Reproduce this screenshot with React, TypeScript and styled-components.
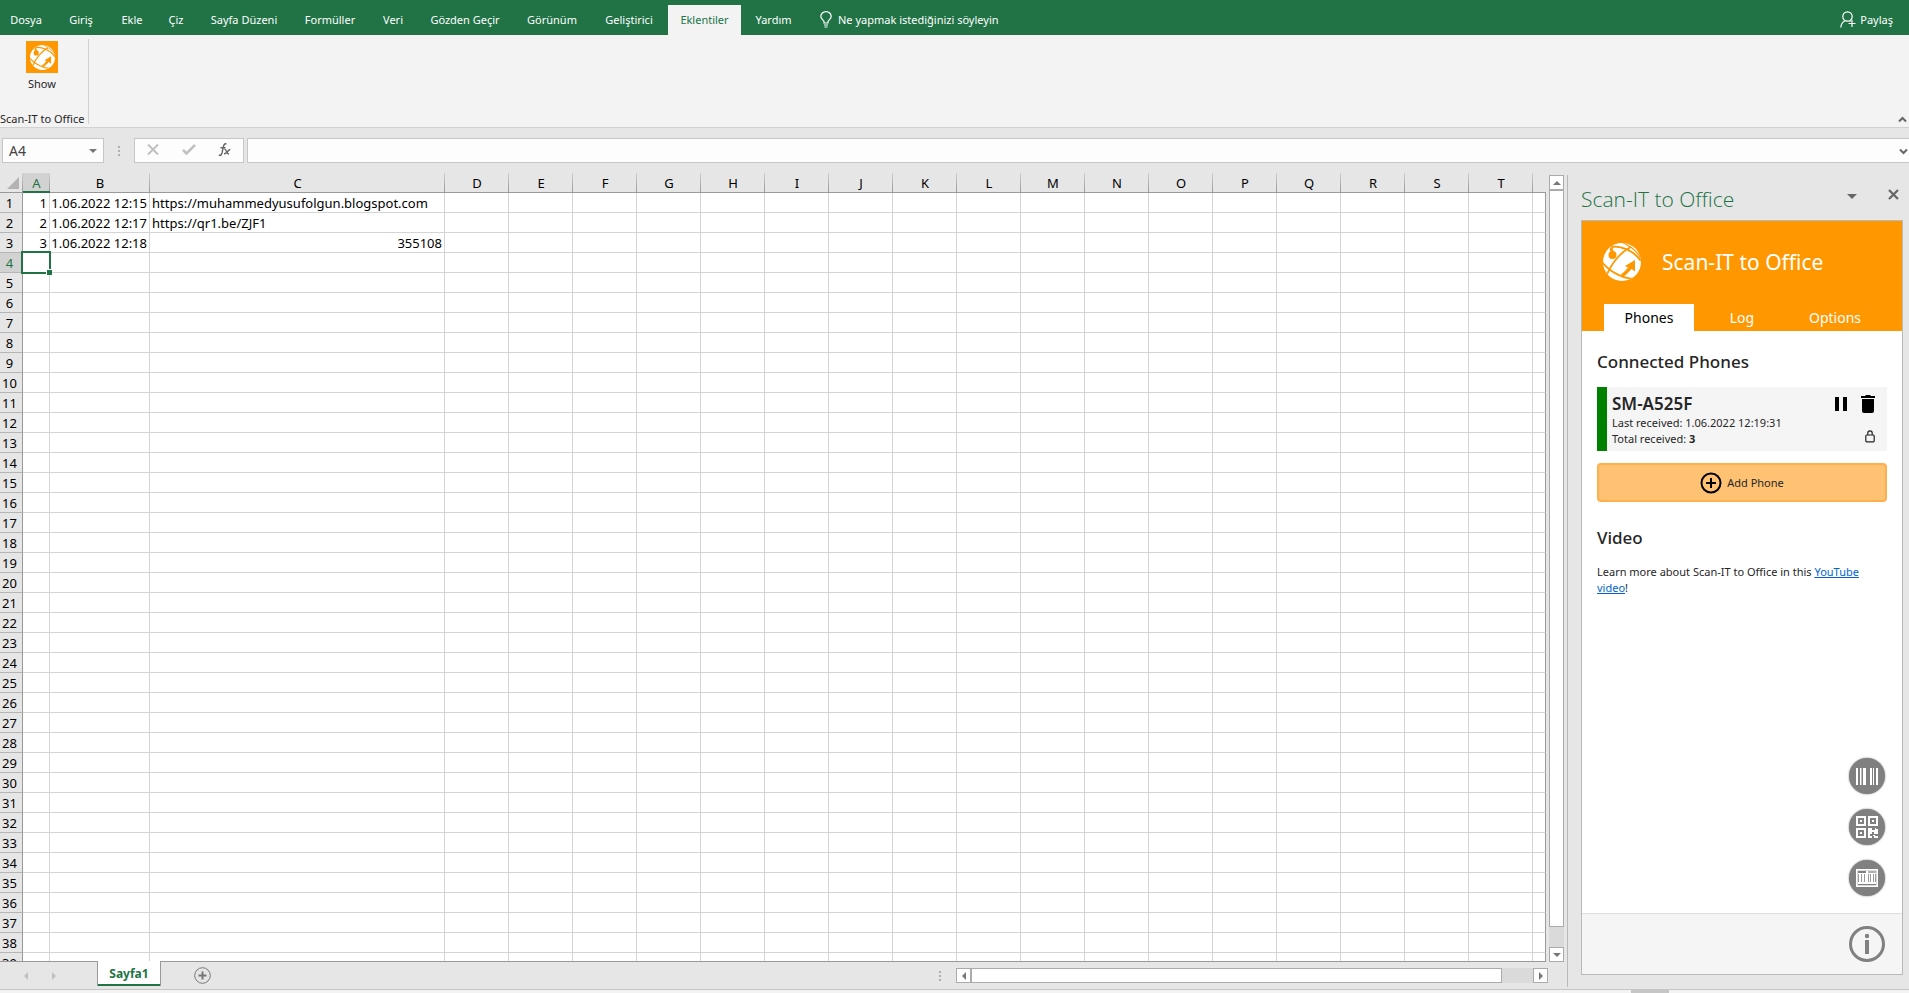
import React from "react";
import styled, { createGlobalStyle, css } from "styled-components";

const ui = `"Noto Sans", "Open Sans", sans-serif`;
const green = "#217346";
const orange = "#ff9800";
const chrome = "#e6e6e6";
const line = "#c6c6c6";

const GlobalStyle = createGlobalStyle`
  *, *::before, *::after { box-sizing: border-box; }
  body { margin: 0; font-family: ${ui}; font-size: 11px; color: #262626; background: ${chrome}; }
  button, input { font: inherit; color: inherit; }
  button { padding: 0; border: 0; background: none; cursor: pointer; }
  h1, h2, h3, p { margin: 0; }
`;

const Window = styled.div`
  display: flex;
  flex-direction: column;
  height: 100vh;
  overflow: hidden;
`;

/* ---------- ribbon ---------- */

const TabBar = styled.nav`
  display: flex;
  flex: none;
  height: 35px;
  padding-top: 5px;
  background: ${green};
  color: #fff;
`;

const RibbonTab = styled.button<{ $active?: boolean; $w: number }>`
  width: ${(p) => p.$w}px;
  height: 30px;
  padding-bottom: 1px;
  white-space: nowrap;
  ${(p) => p.$active && css`background: #f3f3f3; color: ${green};`}
`;

const TellMe = styled.button`
  display: flex;
  align-items: center;
  gap: 6px;
  height: 30px;
  margin-left: 14px;
  padding-bottom: 1px;
  white-space: nowrap;
`;

const Share = styled(TellMe)`
  margin-left: auto;
  margin-right: 16px;
  gap: 4px;
`;

const Ribbon = styled.section`
  display: flex;
  flex: none;
  justify-content: space-between;
  align-items: flex-end;
  height: 93px;
  background: #f3f3f3;
  border-bottom: 1px solid #d2d2d2;
`;

const RibbonGroup = styled.div`
  display: flex;
  flex-direction: column;
  justify-content: space-between;
  width: 89px;
  height: 85px;
  margin-bottom: 3px;
  border-right: 1px solid #d2d2d2;
  white-space: nowrap;
`;

const ShowButton = styled.button`
  display: flex;
  flex-direction: column;
  align-items: center;
  align-self: flex-start;
  gap: 3px;
  width: 84px;
  padding-top: 2px;
  line-height: 16px;
`;

const LogoTile = styled.span`
  display: flex;
  align-items: center;
  justify-content: center;
  width: 32px;
  height: 32px;
  background: ${orange};
`;

const GroupName = styled.span`
  line-height: 10px;
`;

const Collapse = styled.button`
  display: flex;
  padding: 0 2px 4px;
`;

/* ---------- formula bar ---------- */

const FormulaBar = styled.div`
  display: flex;
  flex: none;
  align-items: center;
  height: 35px;
  padding: 10px 0 0 2px;
  color: #444;
`;

const Field = styled.div`
  display: flex;
  align-items: center;
  height: 25px;
  background: #fdfdfd;
  border: 1px solid ${line};
`;

const NameField = styled(Field)`
  width: 102px;
  padding-right: 6px;
`;

const CellInput = styled.input`
  flex: 1;
  min-width: 0;
  height: 23px;
  padding: 0 6px;
  border: 0;
  outline: 0;
  background: none;
  font-size: 14px;
`;

const Grip = styled.span`
  display: flex;
  flex-direction: column;
  gap: 2px;
  &::before, &::after, i { content: ""; width: 2px; height: 2px; background: #b0b0b0; }
`;

const BarGrip = styled(Grip)`
  margin: 0 14px;
`;

const EntryField = styled(Field)`
  justify-content: space-between;
  width: 110px;
  padding: 0 12px;
`;

const FormulaField = styled(Field)`
  flex: 1;
  margin-left: 3px;
  padding-right: 1px;
  border-right: 0;
`;

/* ---------- sheet ---------- */

const Workspace = styled.div`
  display: flex;
  flex: 1;
  min-height: 0;
`;

const Book = styled.main`
  display: flex;
  flex: 1;
  flex-direction: column;
  min-width: 0;
`;

const SheetArea = styled.div`
  display: flex;
  flex: 1;
  min-height: 0;
  padding: 10px 3px 0 0;
`;

const SheetView = styled.div`
  flex: 1;
  min-width: 0;
  overflow: hidden;
  border-bottom: 1px solid #999;
`;

const Grid = styled.table`
  width: 100%;
  table-layout: fixed;
  border-collapse: separate;
  border-spacing: 0;
  font-size: 13px;
  line-height: 18px;
  color: #000;
`;

const Col = styled.col<{ $w?: number }>`
  ${(p) => p.$w && css`width: ${p.$w}px;`}
`;

const ColHead = styled.th<{ $active?: boolean }>`
  height: 20px;
  padding: 1px 0 0;
  font-weight: 400;
  border-bottom: 1px solid #999;
  background: linear-gradient(#cfcfcf, #999) right / 1px 100% no-repeat ${chrome};
  ${(p) =>
    p.$active &&
    css`
      color: ${green};
      background-color: #d2d2d2;
      box-shadow: inset 0 -1px ${green};
      border-bottom-color: ${green};
    `}
  &:last-child { background: ${chrome}; }
`;

const Corner = styled(ColHead)`
  svg { display: block; margin-left: 7px; }
`;

const RowHead = styled.th<{ $active?: boolean }>`
  height: 20px;
  padding: 1px 3px 0 0;
  font-weight: 400;
  text-align: center;
  background: ${(p) => (p.$active ? "#d2d2d2" : chrome)};
  color: ${(p) => (p.$active ? green : "#000")};
  border-right: 1px solid #999;
  border-bottom: 1px solid #b5b5b5;
`;

const Cell = styled.td<{ $right?: boolean }>`
  position: relative;
  height: 20px;
  padding: 1px 2px 0 ${(p) => (p.$right ? 1 : 2)}px;
  white-space: nowrap;
  text-align: ${(p) => (p.$right ? "right" : "left")};
  background: #fff;
  border-right: 1px solid #d4d4d4;
  border-bottom: 1px solid #d4d4d4;
  &:last-child { border-right-color: #999; }
`;

const Selection = styled.div`
  position: absolute;
  inset: -2px;
  z-index: 1;
  border: 2px solid ${green};
  &::after {
    content: "";
    position: absolute;
    right: -3px;
    bottom: -3px;
    width: 6px;
    height: 6px;
    background: ${green};
    border: solid #fff;
    border-width: 1px 0 0 1px;
  }
`;

/* ---------- scroll bars ---------- */

const VScroll = styled.div`
  display: flex;
  flex: none;
  flex-direction: column;
  width: 15px;
  margin: 2px 0 0 3px;
  background: #dadada;
`;

const HScroll = styled.div`
  display: flex;
  width: 592px;
  height: 15px;
  background: #dadada;
`;

const ScrollButton = styled.button`
  display: flex;
  flex: none;
  align-items: center;
  justify-content: center;
  width: 15px;
  height: 15px;
  background: #fff;
  border: 1px solid #ababab;
`;

const VThumb = styled.div`
  flex: 1;
  margin-bottom: 20px;
  background: #fff;
  border: 1px solid #ababab;
`;

const HThumb = styled(VThumb)`
  margin: 0 31px 0 0;
`;

/* ---------- sheet tabs ---------- */

const SheetBar = styled.div`
  display: flex;
  flex: none;
  align-items: center;
  height: 27px;
  padding-right: 19px;
`;

const SheetNav = styled.div`
  display: flex;
  gap: 20px;
  width: 97px;
  padding-left: 22px;
`;

const SheetTab = styled.button`
  position: relative;
  align-self: flex-start;
  width: 64px;
  height: 25px;
  margin-top: -1px;
  background: #fff;
  border: solid #999;
  border-width: 0 1px;
  box-shadow: inset 0 -2px ${green};
  color: ${green};
  font-size: 12px;
  font-weight: 700;
`;

const AddSheet = styled.button`
  display: flex;
  margin-left: 33px;
`;

const SplitGrip = styled(Grip)`
  margin: 0 15px 0 auto;
`;

/* ---------- task pane ---------- */

const Pane = styled.aside`
  display: flex;
  flex: none;
  flex-direction: column;
  width: 342px;
  margin: 12px 0 2px;
  padding: 0 6px 12px 13px;
  border-left: 1px solid #b9b9b9;
`;

const PaneTitleBar = styled.header`
  display: flex;
  flex: none;
  align-items: center;
  height: 45px;
  padding-right: 4px;
`;

const PaneTitle = styled.h1`
  flex: 1;
  padding-top: 2px;
  color: ${green};
  font-family: "Open Sans", ${ui};
  font-size: 21px;
  font-weight: 300;
  line-height: 28px;
  white-space: nowrap;
`;

const PaneControls = styled.div`
  display: flex;
  align-items: center;
  gap: 31px;
  padding-bottom: 4px;
`;

const PaneBody = styled.div`
  display: flex;
  flex: 1;
  flex-direction: column;
  min-height: 0;
  background: #fff;
  border: 1px solid #b9b9b9;
`;

const Banner = styled.div`
  display: flex;
  flex: none;
  flex-direction: column;
  justify-content: space-between;
  height: 110px;
  padding: 22px 22px 0 21px;
  background: ${orange};
  color: #fff;
`;

const Brand = styled.div`
  display: flex;
  align-items: center;
  gap: 21px;
`;

const BrandName = styled.h2`
  font-size: 21px;
  font-weight: 400;
  line-height: 28px;
  white-space: nowrap;
`;

const PaneTabs = styled.div`
  display: flex;
  gap: 3px;
  padding-left: 1px;
`;

const PaneTab = styled.button<{ $active?: boolean }>`
  width: 90px;
  height: 27px;
  font-size: 14px;
  line-height: 27px;
  ${(p) => p.$active && css`background: #fff; color: #000;`}
`;

const Content = styled.div`
  flex: 1;
  padding: 19px 15px 0;
  line-height: 16px;
`;

const Heading = styled.h3`
  font-size: 17px;
  font-weight: 500;
  line-height: 24px;
`;

const PhoneCard = styled.article`
  display: flex;
  justify-content: space-between;
  height: 64px;
  margin: 13px 0 12px;
  padding: 7px 12px 0 5px;
  background: #f5f5f5;
  border-left: 10px solid #008000;
`;

const PhoneName = styled.h4`
  margin: 0 0 1px;
  font-size: 17px;
  font-weight: 600;
  line-height: 20px;
`;

const CardActions = styled.div`
  display: grid;
  grid-template-columns: 14px 14px;
  column-gap: 13px;
  align-content: space-between;
  justify-items: center;
  padding: 1px 0 8px;
  svg { display: block; }
`;

const Lock = styled.span`
  grid-column: 2;
  justify-self: end;
`;

const AddPhone = styled.button`
  display: flex;
  align-items: center;
  justify-content: center;
  gap: 5px;
  width: 100%;
  height: 39px;
  margin-bottom: 24px;
  background: #ffc273;
  border: 2px solid #ffb04d;
  border-radius: 4px;
`;

const Note = styled.p`
  margin-top: 14px;
  line-height: 16px;
  a { color: #0066cc; }
`;

const CodeButtons = styled.div`
  display: flex;
  flex: none;
  flex-direction: column;
  align-items: flex-end;
  gap: 15px;
  padding: 0 17px 17px 0;
`;

const RoundButton = styled.button`
  display: flex;
  align-items: center;
  justify-content: center;
  width: 36px;
  height: 36px;
  border-radius: 50%;
  background: #808080;
  box-shadow: 0 0 2px #808080;
`;

const PaneFooter = styled.footer`
  display: flex;
  flex: none;
  align-items: center;
  justify-content: flex-end;
  height: 61px;
  padding-right: 17px;
  background: #f5f5f5;
  border-top: 1px solid #dedede;
  svg { display: block; }
`;

const StatusStrip = styled.div`
  flex: none;
  height: 4px;
  padding-right: 240px;
  background: #f3f3f3;
  border-top: 1px solid ${line};
  &::after { content: ""; display: block; width: 38px; height: 3px; margin-left: auto; background: ${line}; }
`;

/* ---------- drawings ---------- */

const Globe = ({ size }: { size: number }) => (
  <svg width={size} height={size} viewBox="0 0 38 38" aria-hidden="true">
    <clipPath id={`globe${size}`}><circle cx="19" cy="19" r="19" /></clipPath>
    <g clipPath={`url(#globe${size})`} fill="none" stroke={orange} strokeWidth="1.8">
      <rect width="38" height="38" fill="#fff" stroke="none" />
      <path d="M8 4 C17 2 30 7 38 18" />
      <path d="M19 -1 C22 1 26 3 29 5 C33 8 36 12 39 17" strokeWidth="1.2" />
      <path d="M28 4 C19 8 8 20 3 34" />
      <path d="M-1 19 C5 27 17 35 31 36" />
      <path d="M8 5 L10 12" strokeWidth="3" />
      <circle cx="9.500" cy="12" r="4" fill={orange} stroke="none" />
      <path d="M32 17 L32 28.500 L28.500 26 C25 30 22 33 19 34 L17 32.500 C20 30 23 27 25 24.500 L22 23z" fill={orange} stroke="none" />
    </g>
  </svg>
);

const Triangle = ({ dir, color = "#777" }: { dir: "up" | "down" | "left" | "right"; color?: string }) => {
  const d = { up: "M0 6 4 2 8 6z", down: "M0 2h8L4 6z", left: "M6 0v8L2 4z", right: "M2 0v8l4-4z" }[dir];
  return <svg width="8" height="8" viewBox="0 0 8 8" aria-hidden="true"><path d={d} fill={color} /></svg>;
};

const Chevron = ({ up }: { up?: boolean }) => (
  <svg width="9" height="7" viewBox="0 0 9 7" fill="none" stroke="#666" strokeWidth="2" aria-hidden="true">
    <path d={up ? "M1 5.500 4.500 2 8 5.500" : "M1 1.500 4.500 5 8 1.500"} />
  </svg>
);

const Barcode = () => (
  <svg width="22" height="17" viewBox="0 0 22 17" fill="#fff" aria-hidden="true">
    <path d="M0 0h2v17H0zM4 0h1v17H4zM5.500 0h0.500v17H5.500zM7 0h3v17H7zM14 0h2v17h-2zM17 0h1v17h-1zM20 0h2v17h-2z" />
  </svg>
);

const QrCode = () => (
  <svg width="22" height="22" viewBox="0 0 22 22" fill="#fff" fillRule="evenodd" aria-hidden="true">
    <path d="M0 0h10v10H0zM2 2v6h6V2zM12 0h10v10H12zM14 2v6h6V2zM0 12h10v10H0zM2 14v6h6v-6z" />
    <path d="M4 4h2v2H4zM16 4h2v2h-2zM4 16h2v2H4zM12 12h4v2h3v-2h1v1h2v5h-4v-2h-2v2h-2v4h-2zM14 20h2v2h-2zM17 19h2v1h-2zM18 20h2v2h-2zM20 20h2v2h-2z" />
  </svg>
);

const Label = () => (
  <svg width="22" height="18" viewBox="0 0 22 18" aria-hidden="true">
    <path d="M0 0h22v18H0z" fill="#fff" />
    <path d="M1.500 1.500h19v15h-19z" fill="none" stroke="#dcdcdc" />
    <path d="M2 2h8v2H2zM2 15h18v1H2z" fill="#808080" />
    <path d="M12 2h8v2h-8z" fill="#b0b0b0" />
    <path d="M2 5h1v8H2zM5 5h1v8H5zM8 5h1v8H8zM12 5h1v8h-1zM14 5h1v8h-1zM17 5h1v8h-1zM19 5h1v8h-1z" fill="#9a9a9a" />
  </svg>
);

/* ---------- data ---------- */

const ribbonTabs: [string, number][] = [
  ["Dosya", 52], ["Giriş", 58], ["Ekle", 44], ["Çiz", 44], ["Sayfa Düzeni", 92], ["Formüller", 80], ["Veri", 46],
  ["Gözden Geçir", 98], ["Görünüm", 76], ["Geliştirici", 78], ["Eklentiler", 73], ["Yardım", 65],
];
const columns = "ABCDEFGHIJKLMNOPQRST".split("");
const widths: Record<string, number> = { A: 27, B: 100, C: 295 };
const rows = Array.from({ length: 39 }, (_, i) => i + 1);
const values: Record<string, string> = {
  A1: "1", B1: "1.06.2022 12:15", C1: "https://muhammedyusufolgun.blogspot.com",
  A2: "2", B2: "1.06.2022 12:17", C2: "https://qr1.be/ZJF1",
  A3: "3", B3: "1.06.2022 12:18", C3: "355108",
};

export default function App() {
  return (
    <Window>
      <GlobalStyle />
      <TabBar>
        {ribbonTabs.map(([name, w]) => (
          <RibbonTab key={name} $w={w} $active={name === "Eklentiler"}>{name}</RibbonTab>
        ))}
        <TellMe>
          <svg width="12" height="17" viewBox="0 0 12 17" fill="none" stroke="#fff" strokeWidth="1.2" aria-hidden="true">
            <path d="M4 12V10.500C3.500 9 .8 8 .8 5.500a5.200 4.900 0 0 1 10.400 0C11.200 8 8.500 9 8 10.500V12zM4 14h4M4.500 16h3" />
          </svg>
          Ne yapmak istediğinizi söyleyin
        </TellMe>
        <Share>
          <svg width="16" height="17" viewBox="0 0 16 17" fill="none" stroke="#fff" strokeWidth="1.200" aria-hidden="true">
            <circle cx="7.500" cy="5.500" r="4.700" />
            <path d="M.8 16.500C1 12.500 2.500 11 5 9.700M9.500 9.800l1 .7M12 9v7M8.500 12.500h7" />
          </svg>
          Paylaş
        </Share>
      </TabBar>

      <Ribbon>
        <RibbonGroup>
          <ShowButton><LogoTile><Globe size={25} /></LogoTile>Show</ShowButton>
          <GroupName>Scan-IT to Office</GroupName>
        </RibbonGroup>
        <Collapse aria-label="Collapse ribbon"><Chevron up /></Collapse>
      </Ribbon>

      <FormulaBar>
        <NameField>
          <CellInput aria-label="Name box" defaultValue="A4" />
          <button aria-label="Cell list"><Triangle dir="down" /></button>
        </NameField>
        <BarGrip><i /></BarGrip>
        <EntryField>
          <button aria-label="Cancel">
            <svg width="12" height="11" viewBox="0 0 12 11" stroke="#c0c0c0" strokeWidth="2"><path d="M1 .5 11 10.500M11 .5 1 10.500" /></svg>
          </button>
          <button aria-label="Enter">
            <svg width="14" height="11" viewBox="0 0 14 11" fill="none" stroke="#c0c0c0" strokeWidth="2.500"><path d="M1 6 4.500 9.500 13 1" /></svg>
          </button>
          <button aria-label="Insert function">
            <svg width="13" height="13" viewBox="0 0 13 13" fill="none" stroke="#666" strokeWidth="1.400">
              <path d="M8.500 1.200C6.500 0 5.700 2 5.200 4.500L4 10C3.500 12 2.500 12.800.8 12M2.500 4.800h5M6.500 6.500c2-1 2 5 4.500 4.500M12.300 6.500C10 6.500 9 11 6 10.800" />
            </svg>
          </button>
        </EntryField>
        <FormulaField>
          <CellInput aria-label="Formula" />
          <button aria-label="Expand formula bar"><Chevron /></button>
        </FormulaField>
      </FormulaBar>

      <Workspace>
        <Book>
          <SheetArea>
            <SheetView>
              <Grid>
                <colgroup>
                  <Col $w={23} />
                  {columns.map((c) => <Col key={c} $w={widths[c] ?? 64} />)}
                  <Col />
                </colgroup>
                <thead>
                  <tr>
                    <Corner><svg width="12" height="12" viewBox="0 0 12 12"><path d="M12 0v12H0z" fill="#b3b3b3" /></svg></Corner>
                    {columns.map((c) => <ColHead key={c} $active={c === "A"}>{c}</ColHead>)}
                    <ColHead />
                  </tr>
                </thead>
                <tbody>
                  {rows.map((r) => (
                    <tr key={r}>
                      <RowHead $active={r === 4}>{r}</RowHead>
                      {columns.map((c) => {
                        const v = values[c + r];
                        return (
                          <Cell key={c} $right={!!v && !v.startsWith("http")}>
                            {v}
                            {c + r === "A4" && <Selection />}
                          </Cell>
                        );
                      })}
                      <Cell />
                    </tr>
                  ))}
                </tbody>
              </Grid>
            </SheetView>
            <VScroll>
              <ScrollButton aria-label="Scroll up"><Triangle dir="up" /></ScrollButton>
              <VThumb />
              <ScrollButton aria-label="Scroll down"><Triangle dir="down" /></ScrollButton>
            </VScroll>
          </SheetArea>
          <SheetBar>
            <SheetNav>
              <Triangle dir="left" color="#c0c0c0" />
              <Triangle dir="right" color="#c0c0c0" />
            </SheetNav>
            <SheetTab>Sayfa1</SheetTab>
            <AddSheet aria-label="New sheet">
              <svg width="17" height="17" viewBox="0 0 17 17" fill="none" stroke="#777">
                <circle cx="8.500" cy="8.500" r="7.800" /><path d="M8.500 4.500v8M4.500 8.500h8" strokeWidth="2" />
              </svg>
            </AddSheet>
            <SplitGrip><i /></SplitGrip>
            <HScroll>
              <ScrollButton aria-label="Scroll left"><Triangle dir="left" /></ScrollButton>
              <HThumb />
              <ScrollButton aria-label="Scroll right"><Triangle dir="right" /></ScrollButton>
            </HScroll>
          </SheetBar>
        </Book>

        <Pane>
          <PaneTitleBar>
            <PaneTitle>Scan-IT to Office</PaneTitle>
            <PaneControls>
              <button aria-label="Pane options">
                <svg width="10" height="6" viewBox="0 0 10 6"><path d="M0 0h10L5 5z" fill="#666" /></svg>
              </button>
              <button aria-label="Close pane">
                <svg width="11" height="11" viewBox="0 0 11 11" stroke="#666" strokeWidth="2.200"><path d="M1 1 10 10M10 1 1 10" /></svg>
              </button>
            </PaneControls>
          </PaneTitleBar>
          <PaneBody>
            <Banner>
              <Brand><Globe size={38} /><BrandName>Scan-IT to Office</BrandName></Brand>
              <PaneTabs>
                <PaneTab $active>Phones</PaneTab>
                <PaneTab>Log</PaneTab>
                <PaneTab>Options</PaneTab>
              </PaneTabs>
            </Banner>
            <Content>
              <Heading>Connected Phones</Heading>
              <PhoneCard>
                <div>
                  <PhoneName>SM-A525F</PhoneName>
                  <p>Last received: 1.06.2022 12:19:31</p>
                  <p>Total received: <b>3</b></p>
                </div>
                <CardActions>
                  <button aria-label="Pause">
                    <svg width="12" height="18" viewBox="0 0 12 18"><path d="M0 2h4v14H0zM8 2h4v14H8z" /></svg>
                  </button>
                  <button aria-label="Delete">
                    <svg width="14" height="18" viewBox="0 0 14 18"><path d="M0 1h4l1-1h4l1 1h4v2H0zM1 4h12v12a2 2 0 0 1-2 2H3a2 2 0 0 1-2-2z" /></svg>
                  </button>
                  <Lock>
                    <svg width="10" height="13" viewBox="0 0 10 13" fill="none" stroke="#222" strokeWidth="1.200">
                      <rect x=".8" y="5" width="8.400" height="6.800" rx="1" /><path d="M2.800 5V3a2.200 2.200 0 0 1 4.400 0v2" />
                    </svg>
                  </Lock>
                </CardActions>
              </PhoneCard>
              <AddPhone>
                <svg width="22" height="22" viewBox="0 0 22 22" fill="none" stroke="#000" strokeWidth="2">
                  <circle cx="11" cy="11" r="9.500" /><path d="M11 6v10M6 11h10" />
                </svg>
                Add Phone
              </AddPhone>
              <Heading>Video</Heading>
              <Note>Learn more about Scan-IT to Office in this <a href="#video">YouTube video</a>!</Note>
            </Content>
            <CodeButtons>
              <RoundButton aria-label="Barcode"><Barcode /></RoundButton>
              <RoundButton aria-label="QR code"><QrCode /></RoundButton>
              <RoundButton aria-label="Label"><Label /></RoundButton>
            </CodeButtons>
            <PaneFooter>
              <button aria-label="About">
                <svg width="36" height="36" viewBox="0 0 36 36" fill="#808080">
                  <circle cx="18" cy="18" r="16.500" fill="none" stroke="#808080" strokeWidth="3" />
                  <circle cx="18" cy="10" r="2.200" /><path d="M16 14h4v14h-4z" />
                </svg>
              </button>
            </PaneFooter>
          </PaneBody>
        </Pane>
      </Workspace>
      <StatusStrip />
    </Window>
  );
}
